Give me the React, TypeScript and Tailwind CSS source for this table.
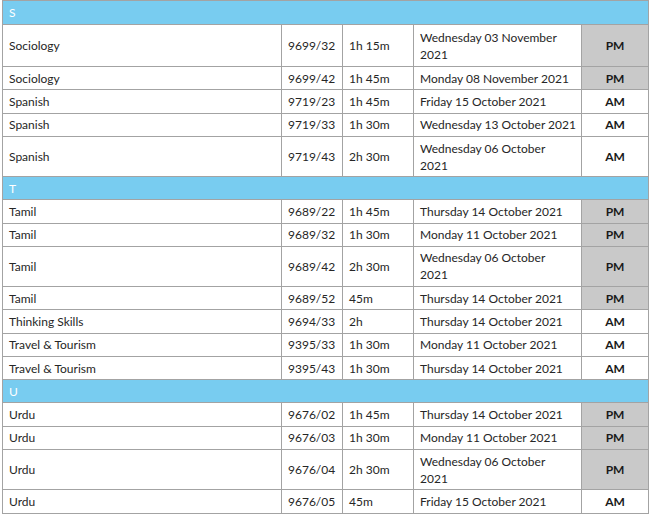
import React from "react";

type Row = {
  subject: string;
  code: string;
  duration: string;
  date: string[];
  session: "AM" | "PM";
};

type Section = { letter: string; rows: Row[] };

const SECTIONS: Section[] = [
  {
    letter: "S",
    rows: [
      { subject: "Sociology", code: "9699/32", duration: "1h 15m", date: ["Wednesday 03 November", "2021"], session: "PM" },
      { subject: "Sociology", code: "9699/42", duration: "1h 45m", date: ["Monday 08 November 2021"], session: "PM" },
      { subject: "Spanish", code: "9719/23", duration: "1h 45m", date: ["Friday 15 October 2021"], session: "AM" },
      { subject: "Spanish", code: "9719/33", duration: "1h 30m", date: ["Wednesday 13 October 2021"], session: "AM" },
      { subject: "Spanish", code: "9719/43", duration: "2h 30m", date: ["Wednesday 06 October", "2021"], session: "AM" },
    ],
  },
  {
    letter: "T",
    rows: [
      { subject: "Tamil", code: "9689/22", duration: "1h 45m", date: ["Thursday 14 October 2021"], session: "PM" },
      { subject: "Tamil", code: "9689/32", duration: "1h 30m", date: ["Monday 11 October 2021"], session: "PM" },
      { subject: "Tamil", code: "9689/42", duration: "2h 30m", date: ["Wednesday 06 October", "2021"], session: "PM" },
      { subject: "Tamil", code: "9689/52", duration: "45m", date: ["Thursday 14 October 2021"], session: "PM" },
      { subject: "Thinking Skills", code: "9694/33", duration: "2h", date: ["Thursday 14 October 2021"], session: "AM" },
      { subject: "Travel & Tourism", code: "9395/33", duration: "1h 30m", date: ["Monday 11 October 2021"], session: "AM" },
      { subject: "Travel & Tourism", code: "9395/43", duration: "1h 30m", date: ["Thursday 14 October 2021"], session: "AM" },
    ],
  },
  {
    letter: "U",
    rows: [
      { subject: "Urdu", code: "9676/02", duration: "1h 45m", date: ["Thursday 14 October 2021"], session: "PM" },
      { subject: "Urdu", code: "9676/03", duration: "1h 30m", date: ["Monday 11 October 2021"], session: "PM" },
      { subject: "Urdu", code: "9676/04", duration: "2h 30m", date: ["Wednesday 06 October", "2021"], session: "PM" },
      { subject: "Urdu", code: "9676/05", duration: "45m", date: ["Friday 15 October 2021"], session: "AM" },
    ],
  },
];

const cell = "border border-[#a3a3a3] px-[6px] align-middle";

export default function App() {
  return (
    <div className="w-[652px] h-[517px] bg-white pl-[2px]">
      <table
        className="table-fixed border-collapse w-[646px] text-[12px] leading-[17px] text-[#262626]"
        style={{ fontFamily: "Lato, 'Noto Sans', sans-serif" }}
      >
        <colgroup>
          <col className="w-[279px]" />
          <col className="w-[61px]" />
          <col className="w-[71px]" />
          <col className="w-[168px]" />
          <col className="w-[67px]" />
        </colgroup>
        <tbody>
          {SECTIONS.map((section, si) => (
            <React.Fragment key={section.letter}>
              <tr>
                <td
                  colSpan={5}
                  className={`${cell} ${si === 0 ? "py-[3px]" : "py-[2.5px]"} bg-[#78ccf0] text-white`}
                >
                  {section.letter}
                </td>
              </tr>
              {section.rows.map((row, ri) => {
                const pad =
                  row.date.length > 1
                    ? si === 0 && ri === 0
                      ? "py-[3.5px]"
                      : "py-[2.5px]"
                    : "py-[2.7px]";
                return (
                  <tr key={row.code}>
                    <td className={`${cell} ${pad}`}>{row.subject}</td>
                    <td className={`${cell} ${pad}`}>{row.code}</td>
                    <td className={`${cell} ${pad}`}>{row.duration}</td>
                    <td className={`${cell} ${pad} whitespace-nowrap`}>
                      {row.date.map((line) => (
                        <div key={line}>{line}</div>
                      ))}
                    </td>
                    <td
                      className={`${cell} ${pad} text-center font-bold text-[#1a1a1a] ${
                        row.session === "PM" ? "bg-[#c9c9c9]" : "bg-white"
                      }`}
                    >
                      {row.session}
                    </td>
                  </tr>
                );
              })}
            </React.Fragment>
          ))}
        </tbody>
      </table>
    </div>
  );
}
